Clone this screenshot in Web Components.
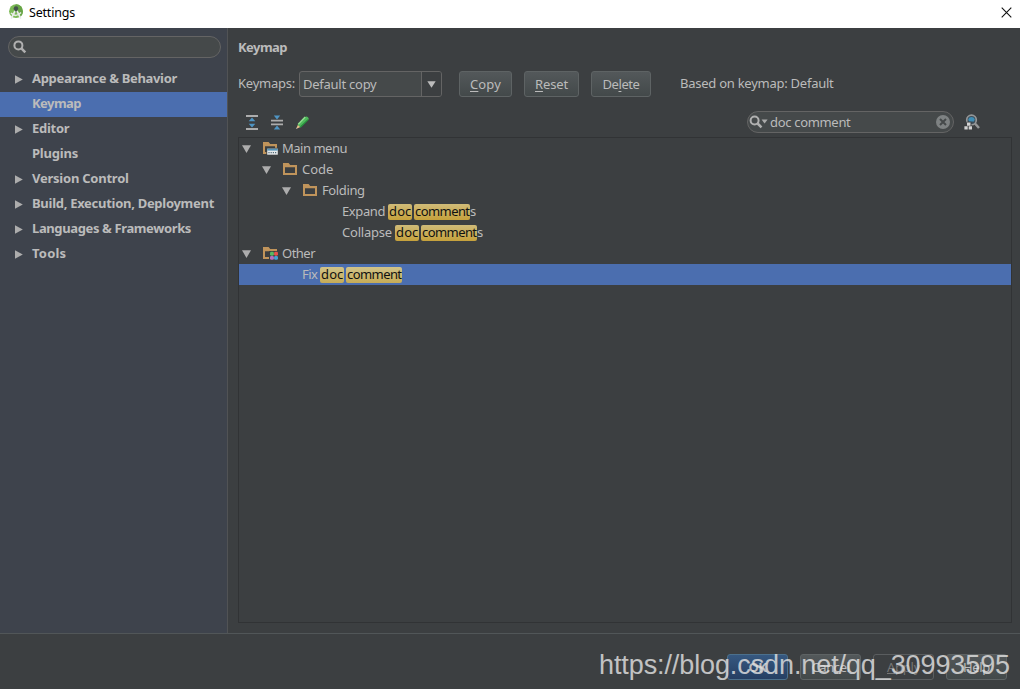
<!DOCTYPE html>
<html lang="en">
<head>
<meta charset="utf-8">
<title>Settings</title>
<style>
html,body{margin:0;padding:0;background:#3c3f41}
body{width:1020px;height:689px;overflow:hidden;font:13px/18px "Noto Sans","Open Sans",sans-serif;color:#bbb}
</style>
</head>
<body>
<settings-window></settings-window>
<script>
const make=(name,html,setup)=>{
  const t=document.createElement('template');t.innerHTML=html;
  customElements.define(name,class extends HTMLElement{
    constructor(){super();this.attachShadow({mode:'open'}).append(t.content.cloneNode(true));}
    connectedCallback(){if(setup)setup(this,this.shadowRoot);}
  });
};

/* Label whose letter spacing adapts to a fixed advance width (w). --lift raises the text in its row. */
make('ui-label',`<style>:host{display:inline-block;white-space:pre;flex:none;margin-top:calc(var(--lift,0px) * -2)}span{display:inline-block}</style><span><slot></slot></span>`,(el,r)=>{
  const w=+el.getAttribute('w');if(!w)return;
  const s=r.querySelector('span'),n=el.textContent.length;
  el.style.width=w+'px';
  s.style.letterSpacing=((w-s.getBoundingClientRect().width)/n)+'px';
});

const icons={
 studio:[16,16,`<circle cx="8" cy="7.2" r="6.9" fill="#7cb956"/><path d="M8 .3a6.9 6.9 0 0 1 6.9 6.9A6.9 6.9 0 0 1 12 13L5 5z" fill="#68a447"/><circle cx="8" cy="4.5" r="2.2" fill="#44524c"/><path d="M8 5v3" stroke="#44524c" stroke-width="2"/><path d="M7 7 3.2 14.6M9 7l3.8 7.6" stroke="#e8ece8" stroke-width="1.7"/><path d="M3 9q5 5 10-.5" stroke="#e8ece8" stroke-width="1.5" fill="none"/>`],
 close:[11,11,`<path d="M.7.7l9.6 9.6M10.3.7L.7 10.3" stroke="#111" stroke-width="1.1"/>`],
 search:[14,14,`<circle cx="5.4" cy="5.4" r="4" fill="none" stroke="#b0b0b0" stroke-width="2"/><path d="M8.4 8.4l3.9 3.9" stroke="#b0b0b0" stroke-width="2.5"/>`],
 searchmenu:[19,14,`<circle cx="5.6" cy="5.5" r="4" fill="none" stroke="#b0b0b0" stroke-width="2"/><path d="M8.6 8.5l3.9 3.9" stroke="#b0b0b0" stroke-width="2.5"/><path d="M12.6 4.6h6l-3 4z" fill="#aaa"/>`],
 right:[8,9,`<path d="M0 .3v8.4L7.8 4.5z" fill="#adadad"/>`],
 down:[9,8,`<path d="M0 .2h9L4.5 8z" fill="#adadad"/>`],
 combo:[9,7,`<path d="M.3.2h8.4L4.5 6.8z" fill="#bbb"/>`],
 expand:[12,15,`<path d="M0 1h12M0 14h12" stroke="#adadad" stroke-width="2"/><path d="M6 2.5 9.3 6.3H2.7zM6 12.5 9.3 8.7H2.7z" fill="#4f95c4"/>`],
 collapse:[12,15,`<path d="M0 5.6h12M0 9.4h12" stroke="#adadad" stroke-width="1.8"/><path d="M2.8.4h6.4L6 4.4zM2.8 14.6h6.4L6 10.6z" fill="#4f95c4"/>`],
 pencil:[13,13,`<path d="M.3 12.7 2 8.6 4.5 11z" fill="#e9c18c"/><path d="M1.6 8.7 8.8 1Q10.5-.2 12 1.2T12.2 4L4.6 11.4z" fill="#4eb85b"/><path d="M2.3 8.3 9.2 1" stroke="#91dc90" stroke-width="1.5"/><path d="M4.5 11 12.1 3.6" stroke="#25893a" stroke-width="1.2"/><path d="M.2 12.8l1.2-.5-.7-.7z" fill="#ddd"/>`],
 clear:[14,14,`<circle cx="7" cy="7" r="7" fill="#7e8283"/><path d="M4 4l6 6M10 4l-6 6" stroke="#45494a" stroke-width="2"/>`],
 find:[16,16,`<circle cx="7.5" cy="6" r="4.8" fill="#3c4d58" stroke="#949697" stroke-width="1.7"/><path d="M4.2 5.3A3.5 3.5 0 0 1 10.8 5.3L10 7.5H5z" fill="#3e8db5"/><path d="M11 9.5l4 4.5" stroke="#949697" stroke-width="2.5"/><path d="M2.6 7.8h4.8v4H9v4.4H0v-4.4h2.6z" fill="#3c3f41"/><path d="M3 8.5h3.5v3.2H3zM.4 12.3h3.3v3.3H.4zM4.7 12.3H8v3.3H4.7z" fill="#d2d2d2"/>`],
 folder:[15,13,`<path d="M0 12V0h5.6l1.6 2H14v10zM2 4.2v5.7h10V4.2z" fill="#c0945b" fill-rule="evenodd"/>`],
 menufolder:[15,13,`<path d="M0 12V0h5.6l1.6 2H14v10zM2 4.2v5.7h10V4.2z" fill="#c0945b" fill-rule="evenodd"/><path d="M3.3 5.8H15V13H3.3z" fill="#3c3f41"/><path d="M4.2 6.7h10.6v6H4.2z" fill="#e6e9eb"/><path d="M4.2 6.7h10.6v1.9H4.2z" fill="#5694b8"/><path d="M5.4 10.6h8.4" stroke="#536b78" stroke-width="1.2" stroke-dasharray="1.2 1"/>`],
 otherfolder:[16,13,`<path d="M0 12V0h5.6l1.6 2H14v10zM2 4.2v5.7h10V4.2z" fill="#c0945b" fill-rule="evenodd"/><path d="M6 4h10v9H6z" fill="#3c3f41"/><g><rect x="7" y="4.8" width="3.9" height="3.9" rx="1.4" fill="#59b861"/><rect x="11.1" y="4.8" width="3.9" height="3.9" rx="1.4" fill="#e5534b"/><rect x="7" y="8.9" width="3.9" height="3.9" rx="1.4" fill="#b56fc0"/><rect x="11.1" y="8.9" width="3.9" height="3.9" rx="1.4" fill="#45a1d4"/></g>`]
};
make('ui-icon',`<style>:host{display:block;flex:none}svg{display:block;overflow:visible}</style>`,(el,r)=>{
  const [w,h,m]=icons[el.getAttribute('name')];
  r.innerHTML+=`<svg width="${w}" height="${h}" viewBox="0 0 ${w} ${h}">${m}</svg>`;
});

make('title-bar',`<style>:host{display:flex;box-sizing:border-box;height:28px;background:#fff;color:#000;align-items:center;padding:0 8px 2px 8px;font-size:12.5px}
ui-label{margin-left:5px}.x{margin-left:auto;margin-top:-1px}.logo{margin-top:-2px}</style>
<ui-icon class="logo" name="studio"></ui-icon><ui-label w="46"><slot></slot></ui-label><ui-icon class="x" name="close"></ui-icon>`,(el,r)=>{
  const l=r.querySelector('ui-label');l.textContent=el.textContent;l.connectedCallback();
});

make('nav-row',`<style>:host{display:flex;height:25px;align-items:center;padding-left:15px;font-weight:700;color:#bbb;--lift:1.5px}:host([selected]){background:#4b6eaf}
i{width:17px;flex:none;margin-top:-1px}</style><i></i><slot></slot>`,(el,r)=>{
  if(el.hasAttribute('branch'))r.querySelector('i').innerHTML='<ui-icon name="right"></ui-icon>';
});

make('side-bar',`<style>:host{display:block;box-sizing:border-box;width:228px;background:#3e434c;border-right:1px solid #515355;padding-top:8px}
.s{display:flex;align-items:center;box-sizing:border-box;width:213px;height:22px;margin:0 0 9px 8px;padding-left:4px;border:1px solid #646464;border-radius:11px;background:#45494a}</style>
<div class="s"><ui-icon name="search"></ui-icon></div>
<nav-row branch><ui-label w="145">Appearance &amp; Behavior</ui-label></nav-row>
<nav-row selected><ui-label w="49">Keymap</ui-label></nav-row>
<nav-row branch><ui-label w="37.3">Editor</ui-label></nav-row>
<nav-row><ui-label w="46">Plugins</ui-label></nav-row>
<nav-row branch><ui-label w="96.7">Version Control</ui-label></nav-row>
<nav-row branch><ui-label w="182">Build, Execution, Deployment</ui-label></nav-row>
<nav-row branch><ui-label w="159">Languages &amp; Frameworks</ui-label></nav-row>
<nav-row branch><ui-label w="34.3">Tools</ui-label></nav-row>`);

make('push-button',`<style>:host{display:flex;box-sizing:border-box;height:26px;align-items:center;justify-content:center;border:1px solid #5e6364;border-radius:3px;background:linear-gradient(#53585a,#43494a);color:#bbb;--lift:.5px}
:host([primary]){background:linear-gradient(#365880,#263f63);border-color:#4c708c;font-weight:700}
:host([disabled]){background:none;color:#777;border-color:#5a5d5f}</style><slot></slot>`);

make('combo-box',`<style>:host{display:flex;box-sizing:border-box;width:143px;height:26px;border:1px solid #646464;border-radius:3px;background:#45494a;align-items:stretch;overflow:hidden;--lift:.5px}
.v{flex:1;display:flex;align-items:center;padding-left:3px}.b{width:19px;display:flex;align-items:center;justify-content:center;border-left:1px solid #646464;background:#3c3f41}</style>
<div class="v"><slot></slot></div><div class="b"><ui-icon name="combo"></ui-icon></div>`);

make('search-box',`<style>:host{display:flex;box-sizing:border-box;width:207px;height:22px;border:1px solid #646464;border-radius:11px;background:#45494a;align-items:center;padding:0 3px 0 1px}
ui-icon:last-child{margin-left:auto}</style><ui-icon name="searchmenu"></ui-icon><slot></slot><ui-icon name="clear"></ui-icon>`);

make('search-hit',`<style>:host{display:block;box-sizing:border-box;flex:none;height:16px;line-height:15px;padding-left:1px;border-radius:2px;background:linear-gradient(#d0bb78,#c5a13c);color:#111;--lift:0px}
:host([lit]){background:linear-gradient(#d1c389,#c6ac57)}</style><slot></slot>`);

make('tree-row',`<style>:host{display:flex;height:21px;align-items:center;box-sizing:border-box;--lift:.5px}:host([selected]){background:#4b6eaf}
.a{width:21px;flex:none}.f{width:19px;flex:none}</style><slot></slot>`,(el,r)=>{
  const lv=+el.getAttribute('level'),ic=el.getAttribute('icon');
  el.style.paddingLeft=(3+lv*20)+'px';
  if(ic)r.querySelector('slot').insertAdjacentHTML('beforebegin',`<span class="a"><ui-icon name="down"></ui-icon></span><span class="f"><ui-icon name="${ic}"></ui-icon></span>`);
});

make('action-tree',`<style>:host{display:block;box-sizing:border-box;width:774px;height:486px;border:1px solid #313335}
search-hit{margin-right:2px;width:24px}search-hit.e{margin-right:0;width:56px}</style>
<tree-row level="0" icon="menufolder"><ui-label w="65">Main menu</ui-label></tree-row>
<tree-row level="1" icon="folder"><ui-label w="31.3">Code</ui-label></tree-row>
<tree-row level="2" icon="folder"><ui-label w="42.7">Folding</ui-label></tree-row>
<tree-row level="5"><ui-label w="46">Expand </ui-label><search-hit><ui-label w="22.5">doc</ui-label></search-hit><search-hit class="e"><ui-label w="54.5">comment</ui-label></search-hit><ui-label w="5.3">s</ui-label></tree-row>
<tree-row level="5"><ui-label w="53">Collapse </ui-label><search-hit><ui-label w="22.5">doc</ui-label></search-hit><search-hit class="e"><ui-label w="54.5">comment</ui-label></search-hit><ui-label w="5.3">s</ui-label></tree-row>
<tree-row level="0" icon="otherfolder"><ui-label w="33">Other</ui-label></tree-row>
<tree-row level="3" selected><ui-label w="18">Fix </ui-label><search-hit lit><ui-label w="22.5">doc</ui-label></search-hit><search-hit lit class="e"><ui-label w="54.5">comment</ui-label></search-hit></tree-row>`);

make('keymap-page',`<style>:host{display:block;padding:10px 0 0 10px;box-sizing:border-box}
h1{margin:0;height:18px;font-size:13px;line-height:18px;font-weight:700}
.bar{display:flex;align-items:center;height:26px;margin-top:15px;--lift:1px}
combo-box{margin:0 17px 0 4px}push-button{margin-right:12px}.based{margin-left:17px}
.tools{display:flex;align-items:center;height:22px;margin:14px 0 4px;padding-left:8px}
.tools ui-icon{margin-right:13px}.tools search-box{margin-left:auto;margin-right:10px}.tools .find{margin-right:40px}
u{text-underline-offset:2px;text-decoration-thickness:1px}</style>
<h1><ui-label w="49">Keymap</ui-label></h1>
<div class="bar"><ui-label w="57">Keymaps:</ui-label><combo-box><ui-label w="73.5">Default copy</ui-label></combo-box>
<push-button style="width:53px"><ui-label w="31"><u>C</u>opy</ui-label></push-button>
<push-button style="width:55px"><ui-label w="33"><u>R</u>eset</ui-label></push-button>
<push-button style="width:60px"><ui-label w="37">De<u>l</u>ete</ui-label></push-button>
<ui-label class="based" w="153.5">Based on keymap: Default</ui-label></div>
<div class="tools"><ui-icon name="expand"></ui-icon><ui-icon name="collapse"></ui-icon><ui-icon name="pencil"></ui-icon>
<search-box><ui-label style="margin-left:2px" w="80.5">doc comment</ui-label></search-box><ui-icon class="find" name="find"></ui-icon></div>
<action-tree></action-tree>`);

make('dialog-footer',`<style>:host{display:flex;box-sizing:border-box;height:56px;border-top:1px solid #515658;justify-content:flex-end;padding:20px 13px 0 0;gap:12px;position:relative}
push-button{width:61px;--lift:0px}
.mark{position:absolute;right:10px;top:14px;font:27px/34px "Liberation Sans",Arial,sans-serif;color:rgba(225,225,225,.82)}</style>
<push-button primary><ui-label w="18">OK</ui-label></push-button>
<push-button><ui-label w="38">Cancel</ui-label></push-button>
<push-button disabled><ui-label w="33"><u>A</u>pply</ui-label></push-button>
<push-button><ui-label w="27">Help</ui-label></push-button>
<ui-label class="mark" w="411">https://blog.csdn.net/qq_30993595</ui-label>`);

make('settings-window',`<style>:host{display:flex;flex-direction:column;width:1020px;height:689px;background:#3c3f41}
main{display:flex;height:605px}keymap-page{flex:1}</style>
<title-bar>Settings</title-bar><main><side-bar></side-bar><keymap-page></keymap-page></main><dialog-footer></dialog-footer>`);
</script>
</body>
</html>
